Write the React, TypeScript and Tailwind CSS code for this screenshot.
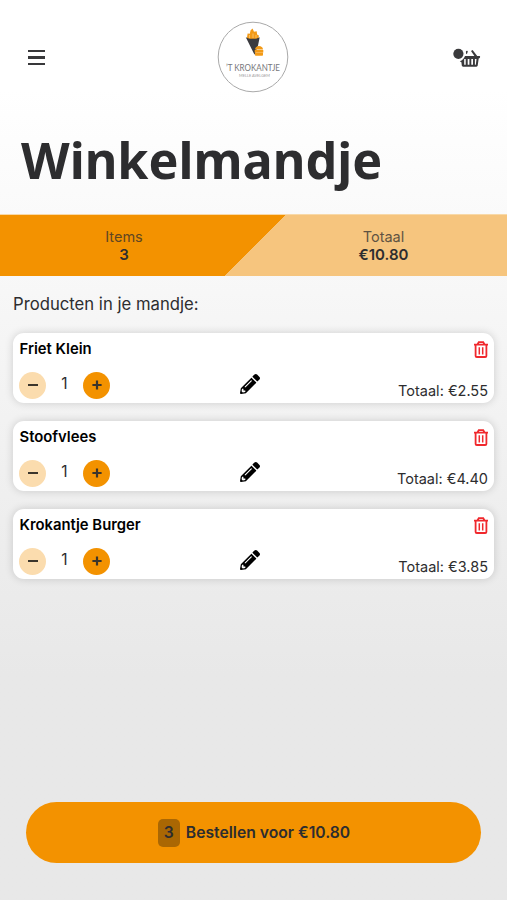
import React, { useState } from "react";
import { FaPencilAlt } from "react-icons/fa";

type Product = { id: number; name: string; price: number; amount: number };

const initialProducts: Product[] = [
  { id: 1, name: "Friet Klein", price: 2.55, amount: 1 },
  { id: 2, name: "Stoofvlees", price: 4.4, amount: 1 },
  { id: 3, name: "Krokantje Burger", price: 3.85, amount: 1 },
];

const formatPrice = (price: number) => `€${price.toFixed(2)}`;

function Logo() {
  return (
    <svg width="72" height="72" viewBox="0 0 72 72">
      <circle cx="36" cy="36" r="34.8" fill="#fff" stroke="#a9a9a9" strokeWidth="1" />
      <path
        d="M29.8 18 30.6 12.5l2.2.2.8-3.4 2-1.8 1.4 3.2 2.7-.5.4 3.2 1.8 1.2-.5 3.6z"
        fill="#f39a16"
      />
      <path d="M32.5 17v-3M36 17v-4.5M39 17v-3" stroke="#fbd08a" strokeWidth=".7" />
      <path d="m28.8 16.3 3.5 1.4h6.8l3.6-1.4-1.7 8.2-3.5 9.3z" fill="#3b3b3f" />
      <path d="M38 28.6c0-4.8 8-4.8 8 0z" fill="#f39a16" />
      <path d="M37.7 29h8.6v2.4h-8.6zM38 31.8h8v1.9c0 .6-.4 1-1 1h-6c-.6 0-1-.4-1-1z" fill="#f39a16" />
      <text
        x="9"
        y="49.6"
        textLength="54"
        lengthAdjust="spacingAndGlyphs"
        fontFamily="Lato, sans-serif"
        fontSize="8.8"
        fill="#77777b"
      >
        ’T KROKANTJE
      </text>
      <text
        x="22"
        y="56.2"
        textLength="31"
        lengthAdjust="spacingAndGlyphs"
        fontFamily="Lato, sans-serif"
        fontSize="4.6"
        fill="#999"
      >
        MELLE AVELGEM
      </text>
    </svg>
  );
}

function BasketIcon() {
  return (
    <svg width="28" height="22" viewBox="0 0 28 22" fill="#3a3a3c">
      <circle cx="5.4" cy="6.8" r="5.1" />
      <path d="M12.9 4.4q.4-.8 1.9-.4l-.5 2.2-1.2 1zM18 4.1l1.6-1 4.6 6h-2.8z" />
      <path
        fillRule="evenodd"
        d="M12 9h14.4c.5 0 .8.4.7.9l-.3 1-1.1.5-1 7.2c-.1.7-.6 1.1-1.3 1.1H10.1c-.7 0-1.2-.4-1.3-1.1l-.4-3.4-1.6-.9c2.4-.8 4.3-2.7 5.2-5.3zM11.2 12v5.8h1.5V12zM14.7 12v5.8h1.7V12zM18.3 12v5.8H20V12zM21.9 12v5.8h.9l.7-5.8z"
      />
    </svg>
  );
}

function TrashIcon() {
  return (
    <svg width="14" height="17" viewBox="0 0 14 17" fill="none" stroke="#f0282d" strokeWidth="1.8">
      <path d="M0 3.6h14M3.6 3.3 4.8 1.1h4.4l1.2 2.2M1.6 3.8v11.1c0 .8.4 1.1 1.2 1.1h8.4c.8 0 1.2-.3 1.2-1.1V3.8" />
      <path d="M5.3 6.2v7.4M8.7 6.2v7.4" strokeWidth="1.5" />
    </svg>
  );
}

export default function App() {
  const [products, setProducts] = useState(initialProducts);

  const count = products.reduce((sum, p) => sum + p.amount, 0);
  const total = products.reduce((sum, p) => sum + p.amount * p.price, 0);

  const changeAmount = (id: number, step: number) => {
    setProducts(
      products.map((p) =>
        p.id === id ? { ...p, amount: Math.max(1, p.amount + step) } : p
      )
    );
  };

  const removeProduct = (id: number) => {
    setProducts(products.filter((p) => p.id !== id));
  };

  return (
    <div className="flex h-screen w-full flex-col overflow-hidden bg-linear-to-b from-white from-10% to-[#e8e8e8] to-75% font-['Inter',sans-serif] text-[#2d2d2f]">
      <header className="flex h-[115px] shrink-0 items-center justify-between pr-[26px] pl-7">
        <button className="flex w-[17px] flex-col gap-1" aria-label="Menu">
          <span className="h-[2.4px] w-full bg-[#38383a]" />
          <span className="h-[2.4px] w-full bg-[#38383a]" />
          <span className="h-[2.4px] w-full bg-[#38383a]" />
        </button>
        <div className="mb-px ml-[8px]">
          <Logo />
        </div>
        <button aria-label="Winkelmandje">
          <BasketIcon />
        </button>
      </header>

      <h1 className="h-[99px] shrink-0 pt-[9px] pl-[21px] font-['Noto_Sans',sans-serif] text-[50.3px] leading-[72px] font-bold">
        Winkelmandje
      </h1>

      <div className="grid h-[62px] shrink-0 grid-cols-[248px_1fr] border-t border-[#f8d9a8] [background:linear-gradient(to_bottom_right,#f39200_50%,transparent_50.5%)_224px_0/61px_100%_no-repeat,linear-gradient(to_right,#f39200_224px,#f6c57e_224px)] pt-[13px] text-center leading-[18px]">
        <div>
          <p className="text-[14.5px] opacity-75">Items</p>
          <p className="text-[15px] font-semibold">{count}</p>
        </div>
        <div className="pl-3">
          <p className="text-[14.5px] opacity-75">Totaal</p>
          <p className="text-[15px] font-semibold">{formatPrice(total)}</p>
        </div>
      </div>

      <main className="flex-1 px-[13px] pt-4">
        <h2 className="text-[16.7px] leading-6">Producten in je mandje:</h2>
        <div className="mt-[17px] flex flex-col gap-[18px]">
          {products.map(({ id, name, price, amount }) => (
            <div
              key={id}
              className="flex h-[70px] flex-col justify-between rounded-[11px] bg-white pr-1.5 pb-[3px] pl-1.5 shadow-[0_0_8px_rgba(0,0,0,0.16)]"
            >
              <div className="flex justify-between pt-[7px]">
                <span className="pl-[0.5px] text-[14.85px] leading-[18px] font-semibold text-black">
                  {name}
                </span>
                <button className="h-[18px] pt-px" onClick={() => removeProduct(id)} aria-label="Verwijder">
                  <TrashIcon />
                </button>
              </div>
              <div className="grid grid-cols-[221px_20px_1fr] items-end">
                <div className="flex items-center pb-px">
                  <button
                    className="flex size-[27px] items-center justify-center rounded-full bg-[#fbdcae]"
                    onClick={() => changeAmount(id, -1)}
                    aria-label="Minder"
                  >
                    <span className="mb-px h-[2.5px] w-2.5 bg-[#3b352c]" />
                  </button>
                  <span className="w-[37px] pb-1 text-center text-[15.5px] leading-5">{amount}</span>
                  <button
                    className="flex size-[27px] items-center justify-center rounded-full bg-[#f39200]"
                    onClick={() => changeAmount(id, 1)}
                    aria-label="Meer"
                  >
                    <svg className="mb-px" width="10" height="10" viewBox="0 0 10 10" stroke="#3b352c" strokeWidth="2.2">
                      <path d="M.4 5h9.2M5 .4v9.2" />
                    </svg>
                  </button>
                </div>
                <FaPencilAlt className="mb-1.5 size-5 text-black" />
                <span className="text-right text-[14.5px] leading-[18px]">
                  Totaal: {formatPrice(price * amount)}
                </span>
              </div>
            </div>
          ))}
        </div>
      </main>

      <footer className="px-[26px] pb-[37px]">
        <button className="flex h-[61px] w-full items-center justify-center gap-1.5 rounded-full bg-[#f39200] pt-px pl-px text-[15.7px] font-semibold">
          <span className="flex h-7 w-[22px] items-center justify-center rounded-[5px] bg-[#aa6703]">
            {count}
          </span>
          Bestellen voor {formatPrice(total)}
        </button>
      </footer>
    </div>
  );
}
